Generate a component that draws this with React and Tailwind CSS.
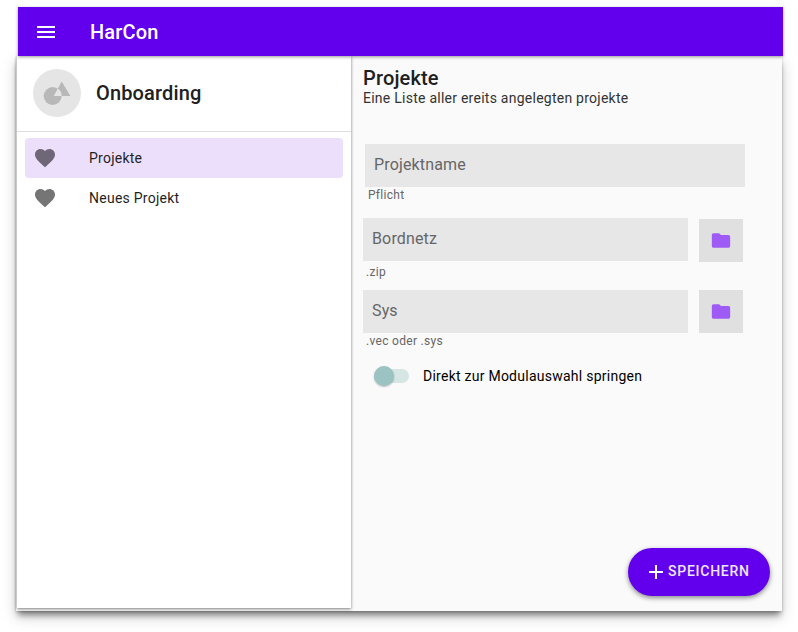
function Heart() {
  return (
    <svg className="size-6 shrink-0" viewBox="0 0 24 24" fill="currentColor">
      <path d="M12 21.35l-1.45-1.32C5.4 15.36 2 12.28 2 8.5 2 5.42 4.42 3 7.5 3c1.74 0 3.41.81 4.5 2.09C13.09 3.81 14.76 3 16.5 3 19.58 3 22 5.42 22 8.5c0 3.78-3.4 6.86-8.55 11.54L12 21.35z" />
    </svg>
  );
}

function NavItem({ label, active }) {
  return (
    <a className={`flex h-10 items-center gap-8 rounded pl-2 text-sm tracking-[0.25px] text-[#1f1f1f] ${active ? "bg-[#ecdffc]" : ""}`}>
      <span className={`flex ${active ? "text-[#6f6677]" : "text-[#757575]"}`}>
        <Heart />
      </span>
      {label}
    </a>
  );
}

function FolderButton({ className = "" }) {
  return (
    <button className={`flex h-[43px] w-11 items-center justify-center bg-[#e0e0e0] text-[#9e5bf5] ${className}`}>
      <svg className="h-[23px] w-[22px]" viewBox="0 0 24 24" fill="currentColor">
        <path d="M10 4H4c-1.1 0-1.99.9-1.99 2L2 18c0 1.1.9 2 2 2h16c1.1 0 2-.9 2-2V8c0-1.1-.9-2-2-2h-8l-2-2z" />
      </svg>
    </button>
  );
}

function Field({ label, className }) {
  return (
    <div className={`flex h-[43px] items-center bg-[#e7e7e7] pl-[9px] pb-0.5 text-base tracking-[0.15px] text-[#666666] ${className}`}>
      {label}
    </div>
  );
}

export default function App() {
  return (
    <div className="h-[632px] w-[798px] overflow-hidden bg-white pt-[7px] font-['Roboto',sans-serif]">
      <header className="relative z-10 ml-[18px] flex h-[49px] w-[765px] items-center bg-[#6200ee] pl-4 text-white shadow-[0_1px_3px_rgba(0,0,0,0.4)]">
        <svg className="size-6" viewBox="0 0 24 24" fill="currentColor">
          <path d="M3 18h18v-2H3v2zm0-5h18v-2H3v2zm0-7v2h18V6H3z" />
        </svg>
        <h1 className="ml-8 text-xl font-medium tracking-[0.15px]">HarCon</h1>
      </header>

      <div className="ml-4 flex h-[555px] w-[766px] bg-[#fafafa] pl-px shadow-[0_6px_6px_-2px_rgba(0,0,0,0.42),0_6px_14px_rgba(0,0,0,0.18),0_1px_2px_rgba(0,0,0,0.16)]">
        <aside className="h-[552px] w-[334px] shrink-0 bg-white shadow-[0_1px_3px_rgba(0,0,0,0.5)]">
          <div className="flex h-[76px] items-center gap-[15px] border-b border-[#dedede] pb-px pl-4">
            <svg className="size-12" viewBox="0 0 48 48">
              <circle cx="24" cy="24" r="24" fill="#e5e5e5" />
              <circle cx="19.7" cy="27" r="9" fill="#b8b8b8" />
              <path d="M28.7 12.5L37.4 27H20.8z" fill="#b8b8b8" />
              <path d="M24.8 19.6A9 9 0 0 1 28.7 27H20.8z" fill="#e5e5e5" />
            </svg>
            <h2 className="text-xl font-medium tracking-[0.15px] text-[#202020]">Onboarding</h2>
          </div>
          <nav className="px-2 pt-1.5">
            <NavItem label="Projekte" active />
            <NavItem label="Neues Projekt" />
          </nav>
        </aside>

        <main className="flex flex-1 flex-col pl-3 pt-[10px]">
          <h2 className="text-xl leading-6 font-medium tracking-[0.15px] text-[#202020]">Projekte</h2>
          <p className="text-sm leading-4 tracking-[0.25px] text-[#333333]">Eine Liste aller ereits angelegten projekte</p>

          <div className="mt-[38px] h-[74px]">
            <Field label="Projektname" className="ml-0.5 w-[380px]" />
            <p className="pl-[5px] text-xs leading-4 tracking-[0.3px] text-[#666666]">Pflicht</p>
          </div>
          <div className="flex h-[72px] gap-[11px]">
            <div>
              <Field label="Bordnetz" className="w-[325px]" />
              <p className="pl-[3px] pt-[3px] text-xs leading-4 tracking-[0.3px] text-[#666666]">.zip</p>
            </div>
            <FolderButton className="mt-px" />
          </div>
          <div className="flex h-[72px] gap-[11px]">
            <div>
              <Field label="Sys" className="w-[325px]" />
              <p className="pl-[3px] text-xs leading-4 tracking-[0.3px] text-[#666666]">.vec oder .sys</p>
            </div>
            <FolderButton />
          </div>

          <label className="ml-[11px] mt-1 flex h-5 items-center gap-[14px] text-sm tracking-[0.25px] text-black">
            <span className="flex h-[14px] w-[35px] items-center rounded-full bg-[#d5e6e4]">
              <span className="size-5 shrink-0 rounded-full bg-[#9bc3c1] shadow-[0_1px_2px_rgba(0,0,0,0.25)]" />
            </span>
            Direkt zur Modulauswahl springen
          </label>

          <button className="mb-[15px] mr-3 mt-auto flex h-12 w-[142px] items-center self-end rounded-full bg-[#6200ee] pl-4 text-sm font-medium tracking-[0.75px] text-white shadow-[0_2px_5px_rgba(0,0,0,0.45)]">
            <svg className="size-6 shrink-0" viewBox="0 0 24 24" fill="currentColor">
              <path d="M19 13h-6v6h-2v-6H5v-2h6V5h2v6h6v2z" />
            </svg>
            <span className="pb-0.5 text-white/90">SPEICHERN</span>
          </button>
        </main>
      </div>
    </div>
  );
}
